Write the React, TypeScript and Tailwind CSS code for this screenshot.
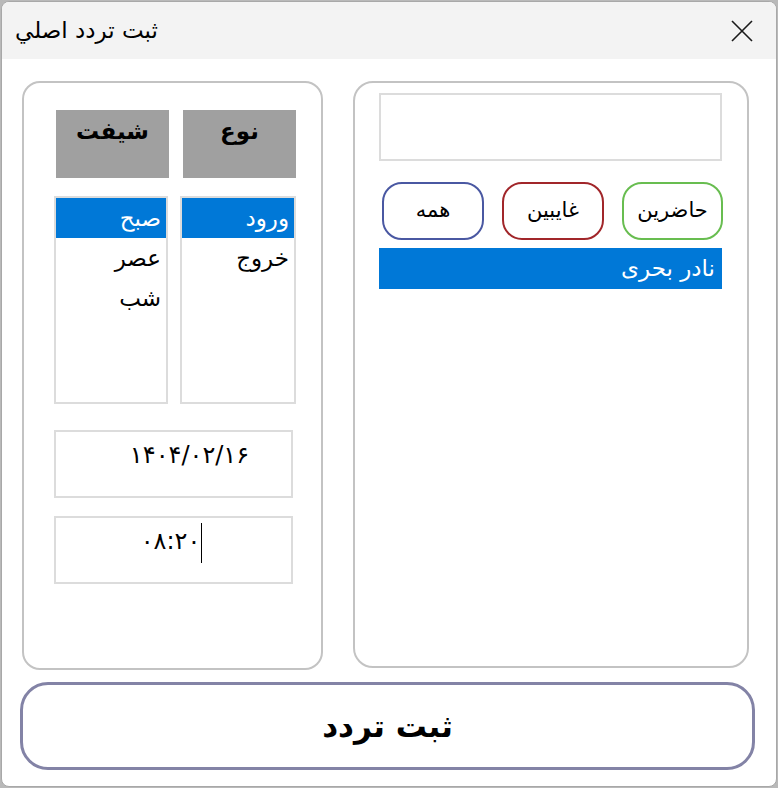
import React from "react";

const font = { fontFamily: '"DejaVu Sans", "Noto Sans", sans-serif' };

export default function App() {
  return (
    <div className="w-[778px] h-[788px] bg-[#b9b9b9] p-[1px]" style={font}>
      <div className="w-full h-full bg-white rounded-[8px] overflow-hidden flex flex-col border border-[#a8a8a8]">
        {/* Title bar */}
        <div className="h-[57px] bg-[#f3f3f3] flex items-center justify-between pl-[13px] pr-[23px] shrink-0">
          <div dir="rtl" className="text-[23px] text-black leading-none">ثبت تردد اصلي</div>
          <svg width="22" height="22" viewBox="0 0 22 22">
            <path d="M1 1 L21 21 M21 1 L1 21" stroke="#1a1a1a" strokeWidth="1.6" />
          </svg>
        </div>
        {/* Body */}
        <div className="flex-1 flex flex-col pt-[22px] pl-[18px] pr-[21px]">
          <div className="flex gap-[30px] h-[589px] pl-[2px]">
            {/* Left panel */}
            <div className="w-[301px] h-full border-2 border-[#c3c3c3] rounded-[18px] flex flex-col pt-[27px] pl-[30px]">
              <div className="flex gap-[14px] pl-[2px]">
                <div className="w-[113px] h-[68px] bg-[#a0a0a0] flex justify-center pt-[4px]">
                  <span dir="rtl" className="text-[23px] font-bold text-black">شيفت</span>
                </div>
                <div className="w-[113px] h-[68px] bg-[#a0a0a0] flex justify-center pt-[4px]">
                  <span dir="rtl" className="text-[23px] font-bold text-black">نوع</span>
                </div>
              </div>
              <div className="flex gap-[12px] mt-[18px]">
                <div dir="rtl" className="w-[114px] h-[208px] border-2 border-[#dcdcdc] flex flex-col">
                  <div className="h-[40px] bg-[#0078d7] text-white text-[23px] flex items-center pr-[5px]">صبح</div>
                  <div className="h-[40px] text-black text-[23px] flex items-center pr-[5px]">عصر</div>
                  <div className="h-[40px] text-black text-[23px] flex items-center pr-[5px]">شب</div>
                </div>
                <div dir="rtl" className="w-[116px] h-[208px] border-2 border-[#dcdcdc] flex flex-col">
                  <div className="h-[40px] bg-[#0078d7] text-white text-[23px] flex items-center pr-[5px]">ورود</div>
                  <div className="h-[40px] text-black text-[23px] flex items-center pr-[5px]">خروج</div>
                </div>
              </div>
              <div className="w-[239px] h-[68px] border-2 border-[#dcdcdc] mt-[26px] flex justify-center pt-[10px] pl-[32px]">
                <span dir="ltr" className="text-[24px] text-black leading-[26px]">۱۴۰۴/۰۲/۱۶</span>
              </div>
              <div className="w-[239px] h-[68px] border-2 border-[#dcdcdc] mt-[18px] flex justify-center pt-[5px] pr-[4px]">
                <span dir="ltr" className="text-[24px] text-black leading-[30px] h-[40px] border-r border-black pr-[1px] pt-[3px]">۰۸:۲۰</span>
              </div>
            </div>
            {/* Right panel */}
            <div className="w-[396px] h-[587px] border-2 border-[#c3c3c3] rounded-[20px] flex flex-col pt-[10px] pl-[24px]">
              <div className="w-[343px] h-[68px] border-2 border-[#dcdcdc]" />
              <div className="flex mt-[21px] pl-[3px] gap-[18px]">
                <div className="w-[102px] h-[58px] border-2 border-[#4a58a2] rounded-[20px] flex items-center justify-center">
                  <span dir="rtl" className="text-[21px] text-black">همه</span>
                </div>
                <div className="w-[102px] h-[58px] border-2 border-[#a1262a] rounded-[20px] flex items-center justify-center">
                  <span dir="rtl" className="text-[21px] text-black">غايبين</span>
                </div>
                <div className="w-[101px] h-[58px] border-2 border-[#68bd50] rounded-[20px] flex items-center justify-center">
                  <span dir="rtl" className="text-[21px] text-black">حاضرين</span>
                </div>
              </div>
              <div dir="rtl" className="w-[343px] h-[41px] bg-[#0078d7] mt-[8px] flex items-center pr-[7px] text-white text-[23px]">نادر بحرى</div>
            </div>
          </div>
          <div className="mt-[12px] h-[88px] w-[735px] border-[3px] border-[#8383a6] rounded-[28px] flex items-center justify-center">
            <span dir="rtl" className="text-[31px] font-bold text-black">ثبت تردد</span>
          </div>
        </div>
      </div>
    </div>
  );
}
